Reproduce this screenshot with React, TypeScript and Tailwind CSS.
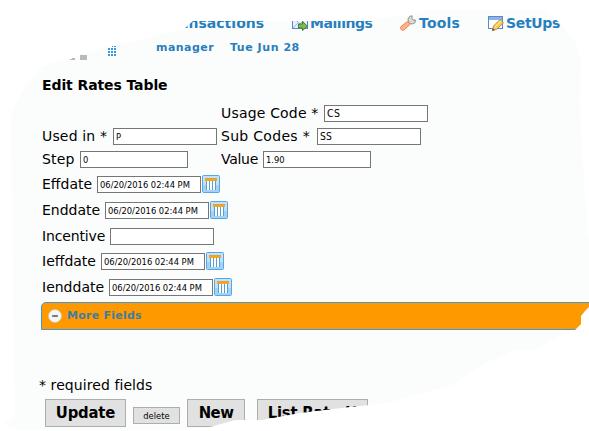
import React from "react";

const verdana = "font-['DejaVu_Sans',Verdana,sans-serif]";
const tahoma = "font-['DejaVu_Sans_Condensed','DejaVu_Sans',Tahoma,sans-serif]";

function CalendarButton() {
  return (
    <button type="button" className="ml-px h-[18px] w-[18px] shrink-0">
      <svg width="18" height="18" viewBox="0 0 18 18" className="block">
        <rect x=".5" y=".5" width="17" height="17" rx="1" fill="#c3e1f9" stroke="#55a8e6" />
        <path d="M1 10h16v7H1z" fill="#a4d1f6" />
        <rect x="3" y="3" width="12" height="3" fill="#f7a51b" />
        <rect x="3" y="3" width="12" height="1" fill="#dfa043" />
        <rect x="4" y="6" width="10" height="9" fill="#ffffff" />
        <path d="M4 6h1v9h-1zM7 6h1v9h-1zM10 6h1v9h-1zM13 6h1v9h-1z" fill="#559fd3" />
      </svg>
    </button>
  );
}

type FieldProps = {
  label: string;
  labelClass: string;
  inputClass?: string;
  textClass?: string;
  value?: string;
  calendar?: boolean;
};

function Field({ label, labelClass, inputClass = "w-[104px]", textClass = "text-[9.3px]", value = "", calendar }: FieldProps) {
  return (
    <div className="flex items-center">
      <label className={`${verdana} shrink-0 whitespace-nowrap text-[14px] leading-[18px] ${labelClass}`}>{label}</label>
      <div className={`${tahoma} mt-px h-[17px] shrink-0 whitespace-nowrap border border-[#767676] bg-white pl-[2px] leading-[15px] ${inputClass} ${textClass}`}>
        {value}
      </div>
      {calendar && <CalendarButton />}
    </div>
  );
}

function MailIcon() {
  return (
    <svg width="16" height="16" viewBox="0 0 16 16">
      <rect x=".5" y="2.500" width="15" height="11" fill="#e6efff" stroke="#5a86cc" />
      <path d="M1 3l7 6 7-6M1 13l5-5M15 13l-5-5" fill="none" stroke="#9db8e4" />
      <path d="M6.500 9h4v-2.500l5 4.700-5 4.300v-2.500h-4z" fill="#7fb955" stroke="#3f7f2a" />
    </svg>
  );
}

function WrenchIcon() {
  return (
    <svg width="16" height="16" viewBox="0 0 16 16">
      <path d="M8.500 7.500L8 4l1.500-2.500L12 .7v3l1 1.300h2.500L15 7.500 12.500 9l-2-.5z" fill="#dcdcdc" stroke="#868686" strokeWidth=".9" />
      <path d="M7.500 6.500L1 11.500c-1.500 2.500 1 5 3.500 3L10.500 9z" fill="#ffb28a" stroke="#e77a46" strokeWidth=".9" />
    </svg>
  );
}

function FormEditIcon() {
  return (
    <svg width="16" height="16" viewBox="0 0 16 16">
      <rect x=".5" y="1.500" width="14" height="12" fill="#fff" stroke="#5c89ce" />
      <path d="M1 2h13v3h-13z" fill="#8db2ea" />
      <path d="M4.500 15.500l1-4.500 6.500-6.500 3.500 3.300-6.700 6.500z" fill="#f8cc58" stroke="#b07a2a" strokeWidth=".8" />
      <path d="M7 12l6-6" stroke="#fff0a9" />
      <path d="M4.300 15.700l.6-2.200 1.700 1.500z" fill="#333" />
    </svg>
  );
}

const buttonBase = `${tahoma} shrink-0 whitespace-nowrap border border-[#adadad] bg-[#e1e1e1] text-center text-black`;

export default function App() {
  return (
    <div className="h-[431px] w-[589px] overflow-hidden bg-white text-black">
      <main className="flex h-[431px] w-[589px] flex-col overflow-hidden bg-[#fbfdfd] [clip-path:polygon(12px_110px,20px_96px,28px_82px,40px_68px,53px_62px,70px_58px,80px_54px,95px_51px,108px_46px,115px_45px,125px_43px,145px_39px,160px_34px,184px_29px,193px_21px,375px_21px,378px_18px,390px_17px,412px_15px,425px_10px,545px_10px,562px_25px,575px_42px,581px_60px,580px_105px,584px_180px,589px_240px,589px_307px,585px_311px,581px_316px,581px_324px,575px_330px,560px_336px,535px_350px,515px_350px,498px_358px,480px_366px,452px_385px,430px_391px,410px_396px,390px_403px,350px_407px,300px_413px,262px_420px,235px_420px,210px_427px,180px_430px,20px_430px,2px_423px,15px_418px,13px_300px,11px_130px)]">
        <nav className={`${verdana} flex h-[40px] items-start pt-[15px] text-[14px] font-bold leading-[16px] text-[#287fbe]`}>
          <div className="ml-[164px] w-[128px] whitespace-nowrap tracking-[0.03px]">Transactions</div>
          <div className="flex w-[108px] items-center"><MailIcon /><span className="ml-[2px] tracking-[-0.45px]">Mailings</span></div>
          <div className="flex w-[88px] items-center"><WrenchIcon /><span className="ml-[3px] tracking-[0.2px]">Tools</span></div>
          <div className="flex items-center"><FormEditIcon /><span className="ml-[2px] tracking-[-0.35px]">SetUps</span></div>
        </nav>
        <div className={`${verdana} flex h-[30px] items-start text-[11px] font-bold leading-[16px] text-[#287fbe]`}>
          <svg className="ml-[70px] mr-[22px] mt-[5px]" width="64" height="22" viewBox="0 0 64 22" shapeRendering="crispEdges">
            <path d="M0 14h2v-1h3v2h-5zM10 10h7v5h-7z" fill="#b9b9b9" />
            <path d="M38 3h2v2h-2zM41 3h2v2h-2zM44 3h2v2h-2zM38 6h2v2h-2zM41 6h2v2h-2zM44 6h2v2h-2zM38 9h2v2h-2zM41 9h2v2h-2zM44 9h2v2h-2zM44 1h2v1h-2zM42 2h1v-1h-1z" fill="#3699df" />
          </svg>
          <span className="w-[74px] tracking-[0.45px]">manager</span><span className="tracking-[0.55px]">Tue Jun 28</span>
        </div>
        <h1 className={`${verdana} ml-[42px] mt-[7px] h-[27px] text-[14px] font-bold leading-[16px] tracking-[-0.1px]`}>Edit Rates Table</h1>
        <div className="ml-[42px] flex flex-col">
          <div className="flex h-[23px] items-start pl-[179px]"><Field label="Usage Code *" labelClass="w-[103px] tracking-[0.18px]" textClass="text-[10.500px] tracking-[0.3px]" value="CS" /></div>
          <div className="flex h-[23px] items-start">
            <div className="w-[179px]"><Field label="Used in *" labelClass="w-[71px] tracking-[0.16px]" value="P" /></div>
            <Field label="Sub Codes *" labelClass="w-[96px] tracking-[0.3px]" textClass="text-[10.300px]" value="SS" />
          </div>
          <div className="flex h-[25px] items-start">
            <div className="w-[179px]"><Field label="Step" labelClass="w-[38px] tracking-[0.16px]" inputClass="w-[108px]" value="0" /></div>
            <Field label="Value" labelClass="w-[42px] tracking-[-0.3px]" inputClass="w-[108px]" value="1.90" />
          </div>
          <div className="h-[26px]"><Field label="Effdate" labelClass="w-[55px]" value="06/20/2016 02:44 PM" calendar /></div>
          <div className="h-[26px]"><Field label="Enddate" labelClass="w-[63px]" value="06/20/2016 02:44 PM" calendar /></div>
          <div className="h-[25px]"><Field label="Incentive" labelClass="w-[68px] tracking-[-0.15px]" /></div>
          <div className="h-[26px]"><Field label="Ieffdate" labelClass="w-[59px]" value="06/20/2016 02:44 PM" calendar /></div>
          <div className="h-[24px]"><Field label="Ienddate" labelClass="w-[67px]" value="06/20/2016 02:44 PM" calendar /></div>
        </div>
        <section className="ml-[41px] flex h-[28px] w-[560px] shrink-0 items-center rounded-tl-[5px] border border-[#4297d7] bg-[#ff9900] pl-[6px]">
          <svg width="14" height="14" viewBox="0 0 15 15"><circle cx="7.500" cy="7.500" r="7" fill="#f5f5f5" stroke="#d6c3a5" /><path d="M4.500 7.500h6" stroke="#777" strokeWidth="2" /></svg>
          <span className={`${verdana} ml-[5px] text-[11px] font-bold tracking-[0.25px] text-[#427da0]`}>More Fields</span>
        </section>
        <p className={`${verdana} ml-[39px] mt-[46px] text-[14px] leading-[18px] tracking-[0.08px]`}>* required fields</p>
        <div className="ml-[45px] mt-[5px] flex items-start">
          <button className={`${buttonBase} h-[28px] w-[81px] text-[16.500px] font-bold leading-[26px] tracking-[-0.2px]`}>Update</button>
          <button className={`${buttonBase} ml-[7px] mt-[8px] h-[17px] w-[47px] text-[9.3px] leading-[15px]`}>delete</button>
          <button className={`${buttonBase} ml-[7px] h-[28px] w-[58px] text-[16.500px] font-bold leading-[26px] tracking-[-0.5px]`}>New</button>
          <button className={`${buttonBase} ml-[12px] h-[28px] w-[111px] text-[16.500px] font-bold leading-[26px] tracking-[-0.2px]`}>List Rate H</button>
        </div>
      </main>
    </div>
  );
}
